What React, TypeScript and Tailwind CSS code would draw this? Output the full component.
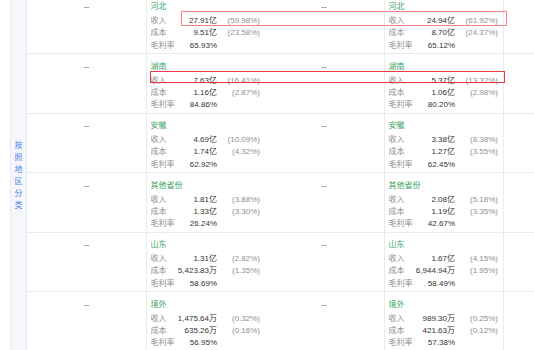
import React from "react";

type Entry = {
  name: string;
  a: { rev: string; revP: string; cost: string; costP: string; gm: string };
  b: { rev: string; revP: string; cost: string; costP: string; gm: string };
};

const rows: Entry[] = [
  {
    name: "河北",
    a: { rev: "27.91亿", revP: "(59.98%)", cost: "9.51亿", costP: "(23.58%)", gm: "65.93%" },
    b: { rev: "24.94亿", revP: "(61.92%)", cost: "8.70亿", costP: "(24.37%)", gm: "65.12%" },
  },
  {
    name: "湖南",
    a: { rev: "7.63亿", revP: "(16.41%)", cost: "1.16亿", costP: "(2.87%)", gm: "84.86%" },
    b: { rev: "5.37亿", revP: "(13.32%)", cost: "1.06亿", costP: "(2.98%)", gm: "80.20%" },
  },
  {
    name: "安徽",
    a: { rev: "4.69亿", revP: "(10.09%)", cost: "1.74亿", costP: "(4.32%)", gm: "62.92%" },
    b: { rev: "3.38亿", revP: "(8.38%)", cost: "1.27亿", costP: "(3.55%)", gm: "62.45%" },
  },
  {
    name: "其他省份",
    a: { rev: "1.81亿", revP: "(3.88%)", cost: "1.33亿", costP: "(3.30%)", gm: "26.24%" },
    b: { rev: "2.08亿", revP: "(5.18%)", cost: "1.19亿", costP: "(3.35%)", gm: "42.67%" },
  },
  {
    name: "山东",
    a: { rev: "1.31亿", revP: "(2.82%)", cost: "5,423.83万", costP: "(1.35%)", gm: "58.69%" },
    b: { rev: "1.67亿", revP: "(4.15%)", cost: "6,944.94万", costP: "(1.95%)", gm: "58.49%" },
  },
  {
    name: "境外",
    a: { rev: "1,475.64万", revP: "(0.32%)", cost: "635.26万", costP: "(0.16%)", gm: "56.95%" },
    b: { rev: "989.30万", revP: "(0.25%)", cost: "421.63万", costP: "(0.12%)", gm: "57.38%" },
  },
];

function Line({ label, value, pct }: { label: string; value: string; pct?: string }) {
  return (
    <div className="grid grid-cols-[26.5px_40px_43px] leading-[12.2px]">
      <span className="text-[#8f8f8f]">{label}</span>
      <span className="text-right text-[#333333]">{value}</span>
      <span className="text-right text-[#8f8f8f]">{pct ?? ""}</span>
    </div>
  );
}

function DataCell({ name, d, w }: { name: string; d: Entry["a"]; w: string }) {
  return (
    <div className={`${w} border-l border-[#e8ebf0] pl-[3.5px] pt-[6.5px]`}>
      <div className="leading-[12.2px] mb-[2px] text-[#3a9f63]">{name}</div>
      <Line label="收入" value={d.rev} pct={d.revP} />
      <Line label="成本" value={d.cost} pct={d.costP} />
      <Line label="毛利率" value={d.gm} />
    </div>
  );
}

function Dash({ w }: { w: string }) {
  return (
    <div className={`${w} pt-[6.5px] text-center leading-[12.2px] text-[#444444]`}>--</div>
  );
}

export default function App() {
  return (
    <div
      className="relative w-[534px] h-[350px] overflow-hidden bg-white text-[8px]"
      style={{ fontFamily: '"Liberation Sans", Arial, "Noto Sans CJK SC", sans-serif' }}
    >
      <div className="flex mt-[-5.5px]">
        <div className="w-[10px] shrink-0" />
        <div className="w-[17px] shrink-0 border-l border-r border-[#e8ebf0] bg-[#f5f7fa] flex flex-col items-center justify-center text-[#4d86e8] leading-[12px] pt-[6px]">
          {"按照地区分类".split("").map((c, i) => (
            <span key={i}>{c}</span>
          ))}
        </div>
        <div className="flex-1 flex flex-col">
          {rows.map((r) => (
            <div key={r.name} className="flex h-[59.5px] border-b border-[#e8ebf0]">
              <Dash w="w-[119px] shrink-0" />
              <DataCell name={r.name} d={r.a} w="w-[118px] shrink-0" />
              <Dash w="w-[120px] shrink-0" />
              <DataCell name={r.name} d={r.b} w="w-[119px] shrink-0" />
              <div className="flex-1 border-l border-[#e8ebf0]" />
            </div>
          ))}
        </div>
      </div>
      <div className="absolute left-[181px] top-[11px] w-[326px] h-[15px] border border-[#f3808a]" />
      <div className="absolute left-[150px] top-[71px] w-[355px] h-[12px] border border-[#e53a40]" />
    </div>
  );
}
